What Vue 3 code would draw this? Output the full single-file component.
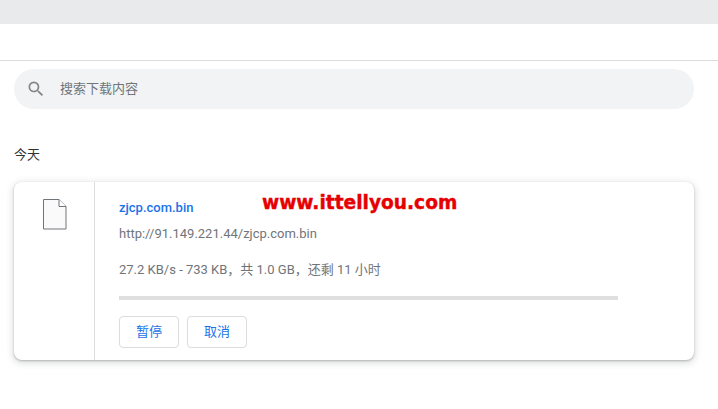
<script setup>
const file = { name: 'zjcp.com.bin', url: 'http://91.149.221.44/zjcp.com.bin', status: '27.2 KB/s - 733 KB，共 1.0 GB，还剩 11 小时' }
</script>

<template>
  <div class="page">
    <div class="tabbar"></div>
    <div class="toolbar"></div>
    <div class="search">
      <svg class="search-icon" width="20" height="20" viewBox="0 0 24 24">
        <path fill="#80868b" d="M15.5 14h-.79l-.28-.27A6.47 6.47 0 0 0 16 9.5 6.5 6.5 0 1 0 9.5 16c1.61 0 3.09-.59 4.23-1.57l.27.28v.79l5 4.99L20.49 19l-4.99-5zm-6 0C7.01 14 5 11.99 5 9.5S7.01 5 9.5 5 14 7.01 14 9.5 11.99 14 9.5 14z"/>
      </svg>
      <span class="placeholder">搜索下载内容</span>
    </div>
    <h2 class="date">今天</h2>
    <div class="card">
      <div class="icon-col">
        <svg width="24" height="31" viewBox="0 0 24 31">
          <path fill="#fafafa" stroke="#70757a" stroke-width="1" d="M.5.5h15.5l7 7v22.5H.5z"/>
          <path fill="#fff" stroke="#70757a" stroke-width="1" d="M16 .5v7h7"/>
        </svg>
      </div>
      <div class="details">
        <a class="name">{{ file.name }}</a>
        <div class="url">{{ file.url }}</div>
        <div class="status">{{ file.status }}</div>
        <div class="progress"></div>
        <div class="actions">
          <button class="btn">暂停</button>
          <button class="btn">取消</button>
        </div>
      </div>
      <div class="watermark">www.ittellyou.com</div>
    </div>
  </div>
</template>

<style>
html, body { margin: 0; background: #fff; overflow: hidden; }
</style>

<style scoped>
.page {
  width: 718px;
  height: 409px;
  overflow: hidden;
  background: #fff;
  font-family: Roboto, "Noto Sans CJK SC", sans-serif;
  font-size: 13px;
}
.tabbar { height: 24px; background: #e8eaec; }
.toolbar { height: 36px; border-bottom: 1px solid #dadce0; }
.search {
  display: flex;
  align-items: center;
  height: 40px;
  margin: 8px 24px 0 14px;
  padding-left: 12px;
  border-radius: 20px;
  background: #f1f3f4;
}
.search-icon { flex: none; }
.placeholder { margin-left: 14px; margin-bottom: 4px; color: #70757a; font-size: 13px; }
.date {
  margin: 37px 0 0 14px;
  height: 18px;
  line-height: 18px;
  font-size: 13px;
  font-weight: 400;
  color: #303134;
}
.card {
  position: relative;
  display: flex;
  height: 178px;
  margin: 18px 24px 0 14px;
  border-radius: 8px;
  background: #fff;
  box-shadow: 0 1px 2px rgba(60, 64, 67, .3), 0 2px 6px 2px rgba(60, 64, 67, .15);
}
.icon-col {
  flex: none;
  box-sizing: border-box;
  width: 81px;
  padding: 17px 0 0 29px;
  border-right: 1px solid #dadce0;
}
.details { padding-left: 24px; flex: 1; }
.name {
  display: block;
  margin-top: 18px;
  height: 16px;
  line-height: 16px;
  font-size: 13px;
  font-weight: 500;
  color: #1a73e8;
}
.url { margin-top: 10px; height: 16px; line-height: 16px; color: #70757a; }
.status { margin-top: 20px; height: 16px; line-height: 16px; color: #70757a; }
.progress { margin-top: 18px; width: 499px; height: 4px; background: #dfdfdf; }
.actions { display: flex; gap: 8px; margin-top: 16px; }
.btn {
  box-sizing: border-box;
  width: 60px;
  height: 32px;
  padding: 0 0 4px;
  border: 1px solid #dadce0;
  border-radius: 4px;
  background: #fff;
  color: #1a73e8;
  font: inherit;
}
.watermark {
  position: absolute;
  left: 248px;
  top: 9px;
  color: #e60000;
  -webkit-text-stroke: 0.4px #e60000;
  font-family: "DejaVu Sans", sans-serif;
  font-weight: 700;
  font-size: 18.6px;
  line-height: 24px;
  white-space: nowrap;
}
</style>
